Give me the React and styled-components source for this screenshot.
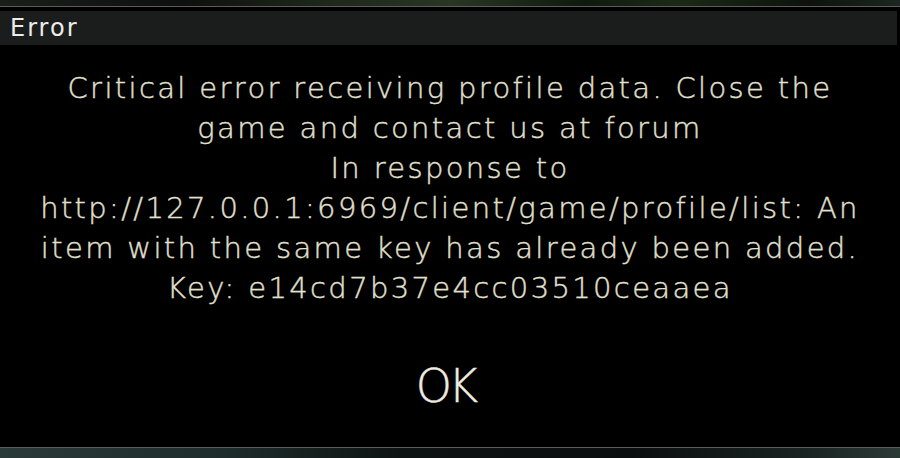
import React from "react";
import styled, { createGlobalStyle } from "styled-components";

const Global = createGlobalStyle`
  html, body { margin: 0; padding: 0; background: #000; }
  body { font-family: "DejaVu Sans", "Noto Sans", sans-serif; }
`;

const Screen = styled.div`
  width: 900px;
  height: 458px;
  display: flex;
  flex-direction: column;
  background: #000;
  overflow: hidden;
`;

const Scenery = styled.div`
  height: ${(p) => p.$h}px;
  flex: none;
  background: ${(p) => p.$bg};
`;

const Rule = styled.div`
  height: 1px;
  flex: none;
  background: #5c5c5c;
`;

const TitleBar = styled.div`
  margin-top: 4px;
  margin-right: 3px;
  height: 34px;
  flex: none;
  background: #1b1d1c;
  display: flex;
  align-items: center;
  padding-left: 10px;
  color: #ececec;
  font-size: 24px;
  letter-spacing: 2px;
`;

const Body = styled.div`
  flex: 1;
  display: flex;
  flex-direction: column;
  align-items: center;
  padding-top: 23px;
`;

const Message = styled.div`
  color: #e2e0d0;
  font-size: 29px;
  font-weight: 300;
  line-height: 40px;
  letter-spacing: 2.35px;
  text-align: center;
  -webkit-text-stroke: 0.4px #e2e0d0;
`;

const Line = styled.div`
  white-space: nowrap;
`;

const OkButton = styled.button`
  margin-top: 51px;
  margin-right: 10px;
  background: none;
  border: none;
  padding: 0;
  color: #eeece0;
  font-family: inherit;
  font-size: 46px;
  font-weight: 300;
  line-height: 54px;
  letter-spacing: -4px;
  -webkit-text-stroke: 0.4px #eeece0;
  cursor: pointer;
`;

const lines = [
  "Critical error receiving profile data. Close the",
  "game and contact us at forum",
  "In response to",
  "http://127.0.0.1:6969/client/game/profile/list: An",
  "item with the same key has already been added.",
  "Key: e14cd7b37e4cc03510ceaaea",
];

export default function App() {
  return (
    <Screen>
      <Global />
      <Scenery
        $h={6}
        $bg="linear-gradient(90deg, #1a1f1a 0%, #0d100d 20%, #1d261a 35%, #2a3522 50%, #0f1a0e 65%, #1b2a15 75%, #0d120c 90%, #1d2620 100%)"
      />
      <Rule />
      <TitleBar>Error</TitleBar>
      <Body>
        <Message>
          {lines.map((l) => (
            <Line key={l}>{l}</Line>
          ))}
        </Message>
        <OkButton>OK</OkButton>
      </Body>
      <Rule />
      <Scenery
        $h={10}
        $bg="linear-gradient(90deg, #2a3a38 0%, #1e2c2b 25%, #0d1212 45%, #0b0e0f 70%, #1a2422 90%, #2c3a36 100%)"
      />
    </Screen>
  );
}
